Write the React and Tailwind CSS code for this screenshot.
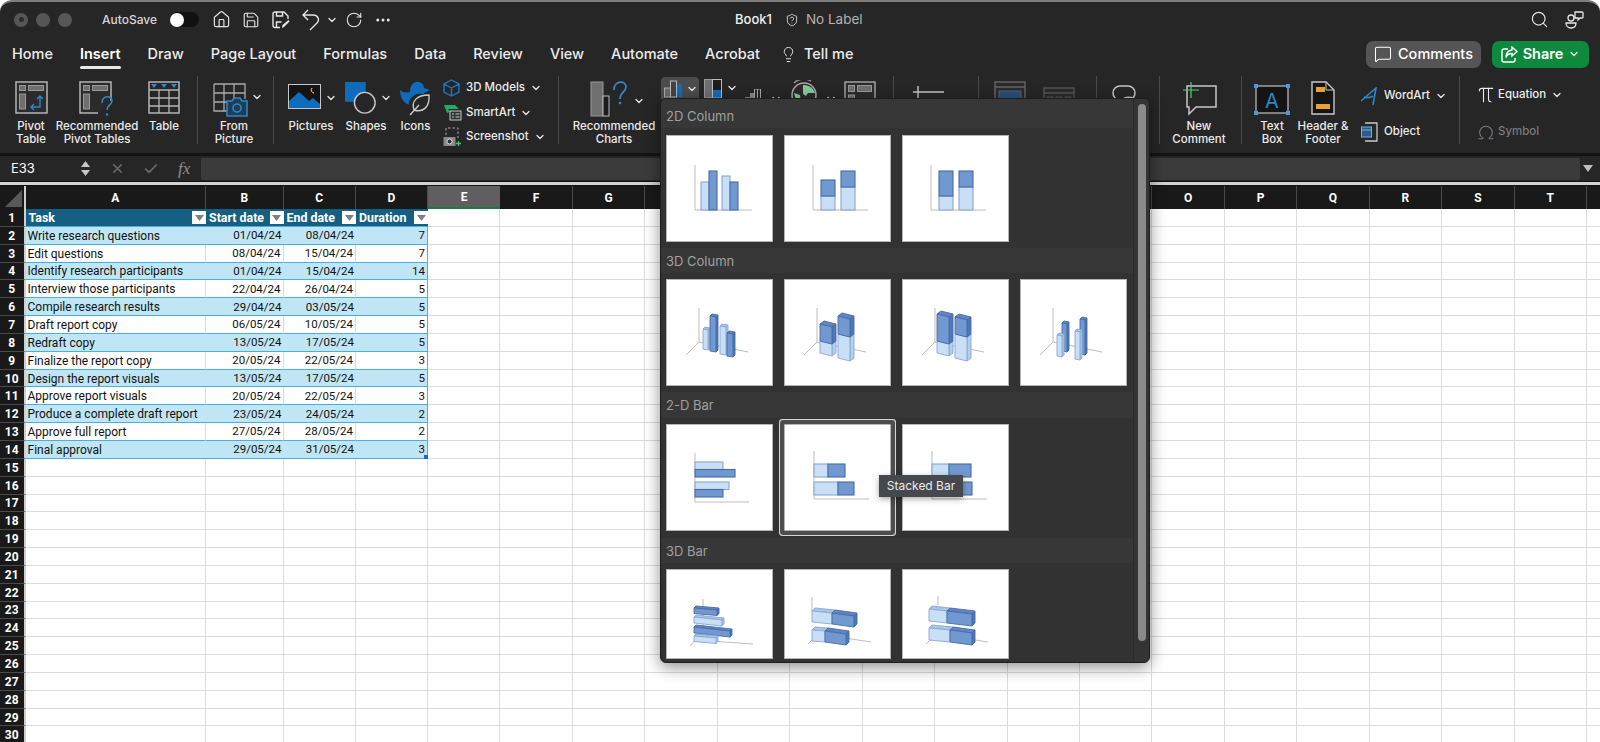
import React from "react";
import {
  House,
  Save,
  RotateCw,
  Ellipsis,
  ChevronDown,
  Lightbulb,
  Search,
  MessageSquare,
  ShieldQuestion,
  Pi,
  Omega,
  X,
  Check,
} from "lucide-react";

const rows = [
  ["Write research questions", "01/04/24", "08/04/24", 7],
  ["Edit questions", "08/04/24", "15/04/24", 7],
  ["Identify research participants", "01/04/24", "15/04/24", 14],
  ["Interview those participants", "22/04/24", "26/04/24", 5],
  ["Compile research results", "29/04/24", "03/05/24", 5],
  ["Draft report copy", "06/05/24", "10/05/24", 5],
  ["Redraft copy", "13/05/24", "17/05/24", 5],
  ["Finalize the report copy", "20/05/24", "22/05/24", 3],
  ["Design the report visuals", "13/05/24", "17/05/24", 5],
  ["Approve report visuals", "20/05/24", "22/05/24", 3],
  ["Produce a complete draft report", "23/05/24", "24/05/24", 2],
  ["Approve full report", "27/05/24", "28/05/24", 2],
  ["Final approval", "29/05/24", "31/05/24", 3],
];

const tabs = ["Home", "Insert", "Draw", "Page Layout", "Formulas", "Data", "Review", "View", "Automate", "Acrobat"];
const emptyCols = "EFGHIJKLMNOPQRST".split("");
const rowNums = Array.from({ length: 30 }, (_, i) => i + 1);

const Chev = ({ className = "" }) => (
  <ChevronDown size={12} strokeWidth={2.6} className={"text-[#e8e8e8] shrink-0 " + className} />
);

const Sep = () => <div className="w-px h-[68px] bg-[#4a4a4a] shrink-0" />;

const BLUE = "#2f86c9";

const PivotIcon = () => (
  <svg width="33" height="33" viewBox="0 0 33 33">
    <rect x="1" y="1" width="31" height="31" fill="#2b2b2b" stroke="#b4b4b4" strokeWidth="1.5" />
    <rect x="4.5" y="4.5" width="6" height="5" fill="#6f6f6f" stroke="#999" />
    <rect x="13.5" y="4.5" width="15" height="5" fill="#6f6f6f" stroke="#999" />
    <rect x="4.5" y="13" width="6" height="15" fill="#6f6f6f" stroke="#999" />
    <path d="M16 26h9V15M22 18l3-3 3 3M19 23l-3 3 3 3" fill="none" stroke={BLUE} strokeWidth="1.4" />
  </svg>
);

const RecPivotIcon = () => (
  <svg width="36" height="36" viewBox="0 0 36 36">
    <path d="M32 20V1H1v31h18" fill="#2b2b2b" stroke="#b4b4b4" strokeWidth="1.5" />
    <rect x="4.5" y="4.5" width="6" height="5" fill="#6f6f6f" stroke="#999" />
    <rect x="13.5" y="4.5" width="15" height="5" fill="#6f6f6f" stroke="#999" />
    <rect x="4.5" y="13" width="6" height="15" fill="#6f6f6f" stroke="#999" />
    <path d="M23 22c0-8 10-8 10-2 0 4-5 4-5 9" fill="none" stroke={BLUE} strokeWidth="1.6" />
    <circle cx="28" cy="33.5" r="1.2" fill={BLUE} />
  </svg>
);

const TableIcon = () => (
  <svg width="32" height="33" viewBox="0 0 32 33">
    <rect x="1" y="1" width="30" height="31" fill="#262626" stroke="#b4b4b4" strokeWidth="1.5" />
    <path d="M1 9h30M1 17h30M1 25h30M11 9v23M21 9v23" stroke="#b4b4b4" strokeWidth="1.3" />
    <path d="M3 3h6l-3 4zM13 3h6l-3 4zM23 3h6l-3 4z" fill={BLUE} />
  </svg>
);

const FromPictureIcon = () => (
  <svg width="36" height="36" viewBox="0 0 36 36">
    <path d="M1 1h31v15M1 1v27h13M1 10h31M1 19h14M11 1v27M21 1v15" fill="none" stroke="#aaa" strokeWidth="1.3" />
    <path d="M14 18h5l2-3h6l2 3h5v15H14z" fill="#1f3d55" stroke={BLUE} strokeWidth="1.6" />
    <circle cx="24" cy="25" r="4" fill="none" stroke={BLUE} strokeWidth="1.6" />
  </svg>
);

const PicturesIcon = () => (
  <svg width="33" height="25" viewBox="0 0 33 25">
    <rect x="0.5" y="0.5" width="32" height="24" fill="#141414" stroke="#c8c8c8" />
    <path d="M1 24V17l10-9 10 9 4-3 7 6v4z" fill="#0f6cbd" />
    <path d="M24 4a3 3 0 0 0 2 5 3 3 0 0 1-2-5z" fill="#e8a33d" stroke="#e8a33d" />
  </svg>
);

const ShapesIcon = () => (
  <svg width="34" height="35" viewBox="0 0 34 35">
    <rect x="0" y="0" width="22" height="21" fill="#0f6cbd" />
    <circle cx="21" cy="22" r="11" fill="#262626" stroke="#c8c8c8" strokeWidth="1.5" />
  </svg>
);

const IconsIcon = () => (
  <svg width="32" height="35" viewBox="0 0 32 35">
    <path d="M0 9c4 3 6 3 10 2 0-7 4-11 9-10 4 1 5 4 5 6l6 2-6 3c0 3-1 5-4 7L14 24C8 26 0 20 0 9z" fill="#0f6cbd" />
    <circle cx="20" cy="24" r="11" fill="#262626" stroke="#262626" />
    <path d="M10 34 19 24M14 29c-3-9 3-15 15-15 1 12-6 18-15 15z" fill="#262626" stroke="#c8c8c8" strokeWidth="1.4" />
  </svg>
);

const CubeIcon = () => (
  <svg width="17" height="18" viewBox="0 0 17 18" fill="none" stroke="#1f77c6" strokeWidth="1.4">
    <path d="M8.5 1 16 5v8l-7.500 4L1 13V5zM1 5l7.500 4L16 5M8.500 9v8" />
  </svg>
);

const SmartArtIcon = () => (
  <svg width="19" height="17" viewBox="0 0 19 17">
    <path d="M1 1h11l4 4H5l2 3-3 1z" fill="#2aa866" />
    <rect x="7" y="7" width="11" height="9" fill="#333" stroke="#c8c8c8" />
    <path d="M9 10h2M12.500 10h4M9 13h2M12.500 13h4" stroke="#c8c8c8" />
  </svg>
);

const ScreenshotIcon = () => (
  <svg width="19" height="20" viewBox="0 0 19 20">
    <path d="M3 8V1h12v10" fill="none" stroke="#aaa" strokeDasharray="2.500 2" />
    <rect x="0.500" y="10" width="12" height="9" fill="#8a8a8a" />
    <circle cx="6.500" cy="14.500" r="2.500" fill="#333" stroke="#ddd" />
    <path d="M15.500 14v5M13 16.500h5" stroke="#4cc06a" strokeWidth="1.3" />
  </svg>
);

const RecChartsIcon = () => (
  <svg width="42" height="36" viewBox="0 0 42 36">
    <rect x="1" y="1" width="12" height="34" fill="#6f6f6f" stroke="#999" />
    <rect x="13" y="15" width="6" height="20" fill="#1c1c1c" stroke="#bbb" />
    <path d="M24 9c0-10 12-10 12-3 0 5-6 5-6 12" fill="none" stroke={BLUE} strokeWidth="1.8" />
    <circle cx="30" cy="22" r="1.300" fill={BLUE} />
  </svg>
);

const ColumnIcon = () => (
  <svg width="19" height="18" viewBox="0 0 19 18">
    <rect x="0.500" y="8" width="6" height="9" fill="#6a6a6a" stroke="#aaa" />
    <rect x="6.500" y="1" width="6" height="16" fill="#444" stroke="#bbb" />
    <rect x="13" y="4" width="5" height="13" fill="#0f6cbd" />
  </svg>
);

const HierarchyIcon = () => (
  <svg width="18" height="19" viewBox="0 0 18 19">
    <rect x="0.500" y="0.500" width="8" height="18" fill="#6f6f6f" stroke="#999" />
    <rect x="8.500" y="0.500" width="9" height="18" fill="#1c1c1c" stroke="#bbb" />
    <rect x="9" y="11" width="8" height="7.500" fill="#0f6cbd" />
  </svg>
);

const WaterfallIcon = () => (
  <svg width="16" height="12" viewBox="0 0 16 12">
    <path d="M0 8h5v4H0zM5 4h4v8H5z" fill="#888" />
    <path d="M9.500 0h6v12h-6z" fill="none" stroke="#aaa" />
    <path d="M12.500 0v12" stroke="#aaa" />
  </svg>
);

const MapIcon = () => (
  <svg width="26" height="28" viewBox="0 0 26 28">
    <circle cx="13" cy="15" r="12" fill="#2b2b2b" stroke="#a8a8a8" strokeWidth="1.500" />
    <path d="M3 3A14 14 0 0 1 20 1" fill="none" stroke="#8a8a8a" strokeWidth="1.500" />
    <path d="M12 5c5 0 10 2 12 8l-7 0-2 3-3-2zM3 13l6 2 1 8-5-3z" fill="#86c995" />
  </svg>
);

const PivotChartIcon = () => (
  <svg width="32" height="32" viewBox="0 0 32 32">
    <rect x="1" y="1" width="30" height="30" fill="#2b2b2b" stroke="#a8a8a8" strokeWidth="1.400" />
    <rect x="4.500" y="4.500" width="6" height="6" fill="#6f6f6f" stroke="#999" />
    <rect x="13.500" y="4.500" width="14" height="6" fill="#6f6f6f" stroke="#999" />
    <rect x="4.500" y="14" width="6" height="14" fill="#6f6f6f" stroke="#999" />
    <rect x="24" y="19" width="4" height="9" fill="none" stroke="#ddd" />
  </svg>
);

const SparkIcon = () => (
  <svg width="31" height="26" viewBox="0 0 31 26" fill="none">
    <path d="M0 7h31M5 1v24" stroke="#c8c8c8" strokeWidth="1.400" />
    <path d="M5 20l4-6 4 6M15 20l4-6 4 6M24 20l3-6 3 6" stroke={BLUE} strokeWidth="1.400" />
  </svg>
);

const DimLayoutIcon = () => (
  <svg width="33" height="28" viewBox="0 0 33 28">
    <rect x="1" y="1" width="30" height="26" fill="#2b2b2b" stroke="#666" strokeWidth="1.400" />
    <path d="M1 6h30" stroke="#666" strokeWidth="1.400" />
    <rect x="5" y="10" width="22" height="8" fill="#2b4f78" stroke="#51657c" />
    <path d="M16 23h16" stroke="#666" strokeWidth="1.400" />
  </svg>
);

const DimLayoutIconTwo = () => (
  <svg width="33" height="24" viewBox="0 0 33 24">
    <rect x="1" y="1" width="30" height="22" fill="#2b2b2b" stroke="#555" strokeWidth="1.400" />
    <path d="M1 6h30" stroke="#555" strokeWidth="1.400" />
    <rect x="4" y="10" width="6" height="6" fill="#3c3c3c" stroke="#555" />
    <rect x="13" y="10" width="6" height="6" fill="#3c3c3c" stroke="#555" />
    <rect x="22" y="10" width="6" height="6" fill="#3c3c3c" stroke="#555" />
  </svg>
);

const LinkedBubbleIcon = () => (
  <svg width="32" height="26" viewBox="0 0 32 26" fill="none" stroke="#c8c8c8" strokeWidth="1.500">
    <rect x="1" y="1" width="22" height="14" rx="7" />
    <path d="M9 19c0-6 6-8 12-6 5 1 9 4 9 9" />
  </svg>
);

const NewCommentIcon = () => (
  <svg width="35" height="34" viewBox="0 0 35 34" fill="none">
    <path d="M5 4h29v21H14l-7 7v-7H5z" stroke="#c8c8c8" strokeWidth="1.500" />
    <path d="M9 0v16M1 8h16" stroke="#52d273" strokeWidth="1.200" />
  </svg>
);

const TextBoxIcon = () => (
  <svg width="36" height="31" viewBox="0 0 36 31">
    <rect x="2" y="2" width="32" height="27" fill="#141414" stroke="#b4b4b4" strokeWidth="1.300" />
    <path d="M0 0h4v4H0zM32 0h4v4h-4zM0 27h4v4H0zM32 27h4v4h-4z" fill="#4a9ae0" />
    <text x="18" y="24" textAnchor="middle" fontSize="20" fontFamily="Inter, sans-serif" fill={BLUE}>A</text>
  </svg>
);

const HeaderFooterIcon = () => (
  <svg width="24" height="34" viewBox="0 0 24 34">
    <path d="M1 1h14l8 8v24H1z" fill="#141414" stroke="#c8c8c8" strokeWidth="1.400" />
    <path d="M15 1v8h8" fill="none" stroke="#c8c8c8" />
    <rect x="5" y="6" width="9" height="5" fill="#e8a033" />
    <rect x="5" y="23" width="14" height="5" fill="#e8a033" />
  </svg>
);

const WordArtIcon = () => (
  <svg width="16" height="19" viewBox="0 0 16 19" fill="none" stroke={BLUE} strokeWidth="1.600">
    <path d="M0 14 15 1l-3 17M3 10c3 1 6 1 9-1" />
  </svg>
);

const ObjectIcon = () => (
  <svg width="17" height="20" viewBox="0 0 17 20" fill="none">
    <path d="M4 1h12v18H4" stroke="#c8c8c8" strokeWidth="1.300" />
    <rect x="0.500" y="5" width="10" height="10" fill="#2a5d8a" stroke="#6fb1e8" />
    <path d="M1 8h9" stroke="#6fb1e8" />
  </svg>
);

const SaveAsIcon = () => (
  <svg width="18" height="18" viewBox="0 0 18 18" fill="none" stroke="#e8e8e8" strokeWidth="1.400">
    <path d="M8 16.500H3a2 2 0 0 1-2-2V3a2 2 0 0 1 2-2h9l4 4v3" />
    <path d="M4.500 1v4h6V1M4.500 16v-5h5" />
    <path d="m10 17 .5-3 6-5 1 1.500-5.500 5.500z" fill="#e8e8e8" stroke="none" />
  </svg>
);

const UndoIcon = () => (
  <svg width="19" height="22" viewBox="0 0 19 22" fill="none" stroke="#e4e4e4" strokeWidth="1.400" className="shrink-0">
    <path d="M7 1 2 6l5 5M2 6h10c5 0 7 5 4 8l-7 7" />
  </svg>
);

const ShareIcon = () => (
  <svg width="17" height="17" viewBox="0 0 17 17" fill="none" stroke="#fff" strokeWidth="1.400">
    <path d="M7 3H3a2 2 0 0 0-2 2v9a2 2 0 0 0 2 2h9a2 2 0 0 0 2-2v-2" />
    <path d="M11 1l5 4.500-5 4.500V7.500c-3 0-5 1-6 4 0-4 2-7 6-7.500z" />
  </svg>
);

const PeopleIcon = () => (
  <svg width="19" height="19" viewBox="0 0 19 19" fill="none" stroke="#e8e8e8" strokeWidth="1.300">
    <circle cx="6" cy="8" r="3" />
    <path d="M1 13h10c0 3-2 5-5 5s-5-2-5-5z" />
    <path d="M10 2h7a1 1 0 0 1 1 1v4a1 1 0 0 1-1 1h-2l-2 2V8h-3z" />
  </svg>
);

// little blue bars used in every chart tile
const LIGHT = { fill: "#c9dff5", stroke: "#8aa6d2", top: "#a9c6ea", side: "#b4cfee" };
const DARK = { fill: "#7298d0", stroke: "#466ca8", top: "#5f86c0", side: "#4f78b4" };

const Bar = ({ x, y, w, h, c }) => <rect x={x} y={y} width={w} height={h} fill={c.fill} stroke={c.stroke} strokeWidth="1.100" />;

const Box = ({ x, y, w, h, s = 1, d = 2, dy = 1.500, c }) => (
  <g stroke={c.stroke} strokeWidth="0.900" strokeLinejoin="round">
    <polygon points={`${x},${y} ${x + d},${y - dy} ${x + w + d},${y + s - dy} ${x + w},${y + s}`} fill={c.top} />
    <polygon points={`${x + w},${y + s} ${x + w + d},${y + s - dy} ${x + w + d},${y + h + s - dy} ${x + w},${y + h + s}`} fill={c.side} />
    <polygon points={`${x},${y} ${x + w},${y + s} ${x + w},${y + h + s} ${x},${y + h}`} fill={c.fill} />
  </g>
);

const Axis2D = ({ d }) => <path d={d} fill="none" stroke="#b5b5b5" strokeWidth="0.900" />;
const AXIS_3D = "M33 29V63M33 63 20 76M33 63 82 73";

const charts = {
  col1: (
    <>
      <Axis2D d="M29 30V75H86" />
      <Bar x={35} y={47} w={8} h={28} c={LIGHT} />
      <Bar x={43} y={36} w={8} h={39} c={DARK} />
      <Bar x={56} y={41} w={8} h={34} c={LIGHT} />
      <Bar x={64} y={47} w={8} h={28} c={DARK} />
    </>
  ),
  col2: (
    <>
      <Axis2D d="M29 30V75H84" />
      <Bar x={37} y={61} w={14} h={14} c={LIGHT} />
      <Bar x={37} y={45} w={14} h={16} c={DARK} />
      <Bar x={57} y={52} w={14} h={23} c={LIGHT} />
      <Bar x={57} y={36} w={14} h={16} c={DARK} />
    </>
  ),
  col3: (
    <>
      <Axis2D d="M29 30V75H84" />
      <Bar x={37} y={61} w={14} h={14} c={LIGHT} />
      <Bar x={37} y={36} w={14} h={25} c={DARK} />
      <Bar x={57} y={52} w={14} h={23} c={LIGHT} />
      <Bar x={57} y={36} w={14} h={16} c={DARK} />
    </>
  ),
  col3d1: (
    <>
      <Axis2D d={AXIS_3D} />
      <Box x={37} y={50} w={5} h={20} d={2} dy={2} c={LIGHT} />
      <Box x={44} y={37} w={6} h={35} d={2} dy={2} c={DARK} />
      <Box x={54} y={47} w={6} h={28} d={2} dy={2} c={LIGHT} />
      <Box x={61} y={54} w={6} h={23} d={2} dy={2} c={DARK} />
    </>
  ),
  col3d2: (
    <>
      <Axis2D d={AXIS_3D} />
      <Box x={36} y={62} w={12} h={12} s={3} d={4} dy={3} c={LIGHT} />
      <Box x={36} y={45} w={12} h={17} s={3} d={4} dy={3} c={DARK} />
      <Box x={54} y={55} w={12} h={24} s={3} d={4} dy={3} c={LIGHT} />
      <Box x={54} y={37} w={12} h={18} s={3} d={4} dy={3} c={DARK} />
    </>
  ),
  col3d3: (
    <>
      <Axis2D d={AXIS_3D} />
      <Box x={35} y={62} w={12} h={12} s={3} d={4} dy={3} c={LIGHT} />
      <Box x={35} y={35} w={12} h={27} s={3} d={4} dy={3} c={DARK} />
      <Box x={53} y={55} w={12} h={24} s={3} d={4} dy={3} c={LIGHT} />
      <Box x={53} y={38} w={12} h={17} s={3} d={4} dy={3} c={DARK} />
    </>
  ),
  col3d4: (
    <>
      <Axis2D d={AXIS_3D} />
      <Box x={42} y={44} w={5} h={28} d={2} dy={2} c={DARK} />
      <Box x={60} y={40} w={5} h={35} d={2} dy={2} c={DARK} />
      <Box x={37} y={56} w={5} h={21} d={2} dy={2} c={LIGHT} />
      <Box x={55} y={52} w={5} h={28} d={2} dy={2} c={LIGHT} />
    </>
  ),
  bar1: (
    <>
      <Axis2D d="M29 29V78H83" />
      <Bar x={29} y={38} w={28} h={7.500} c={LIGHT} />
      <Bar x={29} y={45.500} w={40} h={7.500} c={DARK} />
      <Bar x={29} y={58} w={34} h={7.500} c={LIGHT} />
      <Bar x={29} y={65.500} w={28} h={7.500} c={DARK} />
    </>
  ),
  bar2: (
    <>
      <Axis2D d="M30 27V75H85" />
      <Bar x={30} y={40} w={14} h={13} c={LIGHT} />
      <Bar x={44} y={40} w={17} h={13} c={DARK} />
      <Bar x={30} y={58} w={24} h={13} c={LIGHT} />
      <Bar x={54} y={58} w={16} h={13} c={DARK} />
    </>
  ),
  bar3: (
    <>
      <Axis2D d="M30 27V75H85" />
      <Bar x={30} y={40} w={17} h={13} c={LIGHT} />
      <Bar x={47} y={40} w={22} h={13} c={DARK} />
      <Bar x={30} y={58} w={21} h={13} c={LIGHT} />
      <Bar x={51} y={58} w={19} h={13} c={DARK} />
    </>
  ),
  bar3d1: (
    <>
      <Axis2D d="M37 30V62M29 71 24 77M29 71 87 75" />
      <Box x={28} y={39} w={23} h={5.500} s={2} d={2} dy={2} c={DARK} />
      <Box x={28} y={48} w={28} h={6} s={3} d={2} dy={2} c={LIGHT} />
      <Box x={28} y={58} w={36} h={6} s={4} d={2} dy={2} c={DARK} />
      <Box x={28} y={67} w={22} h={5.500} s={2} d={2} dy={2} c={LIGHT} />
    </>
  ),
  bar3d2: (
    <>
      <Axis2D d="M28 28V42M28 71 24 75M28 64 87 73" />
      <Box x={28} y={42} w={20} h={11} s={2} d={3} dy={3} c={LIGHT} />
      <Box x={48} y={44} w={22} h={11} s={3} d={3} dy={3} c={DARK} />
      <Box x={28} y={61} w={13} h={11} s={1} d={3} dy={3} c={LIGHT} />
      <Box x={41} y={62} w={21} h={11} s={3} d={3} dy={3} c={DARK} />
    </>
  ),
  bar3d3: (
    <>
      <Axis2D d="M36 27V36M28 71 24 75M28 64 86 73" />
      <Box x={27} y={40} w={18} h={12} s={2} d={3} dy={3} c={LIGHT} />
      <Box x={45} y={42} w={25} h={12} s={3} d={3} dy={3} c={DARK} />
      <Box x={27} y={59} w={21} h={12} s={2} d={3} dy={3} c={LIGHT} />
      <Box x={48} y={61} w={22} h={12} s={3} d={3} dy={3} c={DARK} />
    </>
  ),
};

const Tile = ({ name, selected, short }) => (
  <div
    className={
      "w-[107px] bg-white border border-[#b4b4b4] shrink-0 overflow-hidden " +
      (short ? "h-[90px] " : "h-[107px] ") +
      (selected ? "rounded-[1px] shadow-[0_0_0_4px_#4d4d4d,0_0_0_5px_#d6d6d6]" : "")
    }
  >
    <svg width="107" height="107" viewBox="0 0 107 107" className="-m-px">
      {charts[name]}
    </svg>
  </div>
);

const SectionHead = ({ label, className }) => (
  <div className={"bg-[#373737] pl-[5px] flex items-center text-[13px] text-[#a0a0a0] " + className}>{label}</div>
);

const ChartMenu = () => (
  <div className="absolute left-[660px] top-[98px] w-[490px] h-[565px] bg-[#323232] rounded-md border border-[#1d1d1d] shadow-[0_4px_16px_rgba(0,0,0,0.45)] overflow-hidden flex z-20">
    <div className="w-[472px] h-full overflow-hidden shrink-0">
      <SectionHead label="2D Column" className="h-[29px] pt-[6px]" />
      <div className="flex gap-[11px] pl-[5px] pt-[7px] pb-[6px]">
        <Tile name="col1" />
        <Tile name="col2" />
        <Tile name="col3" />
      </div>
      <SectionHead label="3D Column" className="h-[25px] pt-[2px]" />
      <div className="flex gap-[11px] pl-[5px] pt-[6px] pb-[6px]">
        <Tile name="col3d1" />
        <Tile name="col3d2" />
        <Tile name="col3d3" />
        <Tile name="col3d4" />
      </div>
      <SectionHead label="2-D Bar" className="h-[26px] pt-[2px]" />
      <div className="flex gap-[11px] pl-[5px] pt-[6px] pb-[7px]">
        <Tile name="bar1" />
        <Tile name="bar2" selected />
        <Tile name="bar3" />
      </div>
      <SectionHead label="3D Bar" className="h-[25px] pt-[2px]" />
      <div className="flex gap-[11px] pl-[5px] pt-[6px]">
        <Tile name="bar3d1" short />
        <Tile name="bar3d2" short />
        <Tile name="bar3d3" short />
      </div>
    </div>
    <div className="flex-1 border-l border-[#2a2a2a] bg-[#343434] pl-[4px] pt-[5px]">
      <div className="w-[8px] h-[537px] rounded-full bg-[#8a8a8a]" />
    </div>
    <div className="absolute left-[218px] top-[376px] h-[22px] w-[84px] bg-[#45484d] text-[#ececec] text-[12px] flex items-center justify-center shadow-[0_2px_6px_rgba(0,0,0,0.35)]">
      Stacked Bar
    </div>
  </div>
);

const FilterBtn = () => (
  <span className="ml-auto w-[14px] h-[13px] bg-white flex items-center justify-center shrink-0">
    <svg width="9" height="6" viewBox="0 0 9 6">
      <path d="M0 0h9L4.500 6z" fill="#7f7f7f" />
    </svg>
  </span>
);

const Sheet = () => (
  <div className="grid grid-cols-[25.500px_180.500px_77.500px_72.500px_72px_repeat(16,72.440px)_1fr] grid-rows-[23px] auto-rows-[17.850px] font-[Roboto,sans-serif] text-[11.500px] text-[#111] bg-white">
    <div className="bg-[#191919] border-r-2 border-[#cfcfcf] relative overflow-hidden">
      <svg width="17" height="17" viewBox="0 0 17 17" className="absolute right-[2px] bottom-[2px]">
        <path d="M17 0v17H0z" fill="#595959" />
      </svg>
    </div>
    {["A", "B", "C", "D"].map((c) => (
      <div key={c} className="bg-[#191919] border-r border-[#4a4a4a] text-white font-bold text-[12px] flex items-center justify-center">
        {c}
      </div>
    ))}
    {emptyCols.map((c) =>
      c === "E" ? (
        <div key={c} className="bg-[#5f5f5f] border-b-2 border-[#1d7a45] text-white font-bold text-[12px] flex items-center justify-center">
          {c}
        </div>
      ) : (
        <div key={c} className="bg-[#191919] border-r border-[#4a4a4a] text-white font-bold text-[12px] flex items-center justify-center">
          {c}
        </div>
      )
    )}
    <div className="bg-[#191919]" />

    {rowNums.map((n) => {
      const row = rows[n - 2];
      const band = n % 2 === 0;
      return (
        <React.Fragment key={n}>
          <div className="bg-[#191919] border-r-2 border-b border-r-[#cfcfcf] border-b-[#4a4a4a] text-white font-bold text-[12px] pt-[1px] flex items-center justify-center">
            {n}
          </div>
          {n === 1 &&
            ["Task", "Start date", "End date", "Duration"].map((h) => (
              <div key={h} className="bg-[#156082] text-white font-bold text-[12.400px] pl-[3px] pt-[1px] flex items-center border-b border-[#45b0e1] whitespace-nowrap">
                {h}
                <FilterBtn />
              </div>
            ))}
          {row && (
            <>
              <div className={"flex items-center pl-[2px] pt-[1px] text-[12px] whitespace-nowrap border-b border-b-[#45b0e1] " + (band ? "bg-[#c0e6f5]" : "bg-white border-r border-r-[#dcdcdc]")}>
                {row[0]}
              </div>
              <div className={"flex items-center justify-end pr-[2px] pt-[1px] border-b border-b-[#45b0e1] " + (band ? "bg-[#c0e6f5]" : "bg-white border-r border-r-[#dcdcdc]")}>
                {row[1]}
              </div>
              <div className={"flex items-center justify-end pr-[2px] pt-[1px] border-b border-b-[#45b0e1] " + (band ? "bg-[#c0e6f5]" : "bg-white border-r border-r-[#dcdcdc]")}>
                {row[2]}
              </div>
              <div className={"relative flex items-center justify-end pr-[2px] pt-[1px] border-b border-b-[#45b0e1] border-r border-r-[#45b0e1] " + (band ? "bg-[#c0e6f5]" : "bg-white")}>
                {row[3]}
                {n === 14 && <span className="absolute right-[-1px] bottom-[-1px] w-[4px] h-[4px] bg-[#2a62c4]" />}
              </div>
            </>
          )}
          {n > 14 &&
            [0, 1, 2, 3].map((i) => <div key={i} className="border-r border-b border-[#dcdcdc]" />)}
          {emptyCols.map((c) => (
            <div key={c} className="border-r border-b border-[#dcdcdc]" />
          ))}
          <div className="border-b border-[#dcdcdc]" />
        </React.Fragment>
      );
    })}
  </div>
);

const ItemLabel = ({ children }) => (
  <div className="text-center text-[11.500px] leading-[13px] font-medium text-[#ececec] whitespace-nowrap">{children}</div>
);

const Ribbon = () => (
  <div className="flex h-[82px] pt-[5px] pl-[8px] shrink-0">
    <div className="w-[46px] flex flex-col items-center">
      <div className="h-[44px] pt-[5px]"><PivotIcon /></div>
      <ItemLabel>Pivot<br />Table</ItemLabel>
    </div>
    <div className="w-[86px] flex flex-col items-center">
      <div className="h-[44px] pt-[5px]"><RecPivotIcon /></div>
      <ItemLabel>Recommended<br />Pivot Tables</ItemLabel>
    </div>
    <div className="w-[48px] flex flex-col items-center">
      <div className="h-[44px] pt-[5px]"><TableIcon /></div>
      <ItemLabel>Table</ItemLabel>
    </div>
    <div className="ml-[9px]"><Sep /></div>
    <div className="w-[72px] flex flex-col items-center">
      <div className="h-[44px] pt-[7px] flex items-start gap-[2px] ml-[8px]">
        <FromPictureIcon />
        <Chev className="mt-[8px]" />
      </div>
      <ItemLabel>From<br />Picture</ItemLabel>
    </div>
    <div className="ml-[3px]"><Sep /></div>

    <div className="ml-[8px] w-[58px] flex flex-col">
      <div className="h-[44px] pt-[8px] pl-[6px] flex items-start gap-[4px]">
        <PicturesIcon />
        <Chev className="mt-[8px]" />
      </div>
      <ItemLabel>Pictures</ItemLabel>
    </div>
    <div className="w-[52px] flex flex-col">
      <div className="h-[44px] pt-[5px] pl-[5px] flex items-start gap-[3px]">
        <ShapesIcon />
        <Chev className="mt-[11px]" />
      </div>
      <ItemLabel>Shapes</ItemLabel>
    </div>
    <div className="w-[47px] flex flex-col items-center">
      <div className="h-[44px] pt-[5px]"><IconsIcon /></div>
      <ItemLabel>Icons</ItemLabel>
    </div>
    <div className="w-[119px] pl-[4px] flex flex-col text-[11.500px] font-medium text-[#ececec] whitespace-nowrap">
      <div className="flex items-center h-[17px] mt-[3px]">
        <span className="w-[23px]"><CubeIcon /></span>3D Models<Chev className="ml-[5px]" />
      </div>
      <div className="flex items-center h-[17px] mt-[8px]">
        <span className="w-[23px]"><SmartArtIcon /></span>SmartArt<Chev className="ml-[5px]" />
      </div>
      <div className="flex items-center h-[17px] mt-[7px]">
        <span className="w-[23px]"><ScreenshotIcon /></span>Screenshot<Chev className="ml-[5px]" />
      </div>
    </div>
    <Sep />

    <div className="ml-[13px] w-[84px] flex flex-col items-center">
      <div className="h-[44px] pt-[5px] flex items-start gap-[1px] ml-[6px]">
        <RecChartsIcon />
        <Chev className="mt-[14px]" />
      </div>
      <ItemLabel>Recommended<br />Charts</ItemLabel>
    </div>

    <div className="ml-[5px] mt-[1px] w-[38px] h-[24px] bg-[#4c4c4c] rounded-[4px] flex items-center pl-[3px] gap-[3px]">
      <ColumnIcon />
      <Chev />
    </div>
    <div className="ml-[5px] mt-[3px]"><HierarchyIcon /></div>
    <Chev className="ml-[4px] mt-[6px]" />
    <div className="ml-[7px] mt-[13px]"><WaterfallIcon /></div>
    <Chev className="ml-[9px] mt-[17px]" />
    <div className="ml-[9px] mt-[4px]"><MapIcon /></div>
    <Chev className="ml-[8px] mt-[17px]" />
    <div className="ml-[7px] mt-[5px]"><PivotChartIcon /></div>
    <div className="ml-[17px]"><Sep /></div>
    <div className="ml-[19px] mt-[9px]"><SparkIcon /></div>
    <Chev className="ml-[5px] mt-[18px]" />
    <div className="ml-[17px]"><Sep /></div>
    <div className="ml-[15px] mt-[5px]"><DimLayoutIcon /></div>
    <div className="ml-[16px] mt-[11px]"><DimLayoutIconTwo /></div>
    <div className="ml-[20px]"><Sep /></div>
    <div className="ml-[15px] mt-[9px]"><LinkedBubbleIcon /></div>
    <div className="ml-[15px]"><Sep /></div>

    <div className="w-[78px] flex flex-col items-center">
      <div className="h-[44px] pt-[6px] pl-[1px]"><NewCommentIcon /></div>
      <ItemLabel>New<br />Comment</ItemLabel>
    </div>
    <div className="ml-[3px]"><Sep /></div>
    <div className="ml-[5px] w-[50px] flex flex-col items-center">
      <div className="h-[44px] pt-[8px]"><TextBoxIcon /></div>
      <ItemLabel>Text<br />Box</ItemLabel>
    </div>
    <div className="w-[52px] flex flex-col items-center">
      <div className="h-[44px] pt-[5px]"><HeaderFooterIcon /></div>
      <ItemLabel>Header &amp;<br />Footer</ItemLabel>
    </div>
    <div className="w-[110px] pl-[12px] flex flex-col text-[11.500px] font-medium text-[#ececec]">
      <div className="flex items-center h-[20px] mt-[10px]">
        <span className="w-[23px]"><WordArtIcon /></span>WordArt<Chev className="ml-[5px]" />
      </div>
      <div className="flex items-center h-[20px] mt-[16px]">
        <span className="w-[23px]"><ObjectIcon /></span>Object
      </div>
    </div>
    <Sep />
    <div className="pl-[16px] flex flex-col text-[11.500px] font-medium">
      <div className="flex items-center h-[20px] mt-[9px] text-[#ececec]">
        <Pi size={20} strokeWidth={1.3} className="w-[24px] -ml-[2px]" />Equation<Chev className="ml-[5px]" />
      </div>
      <div className="flex items-center h-[20px] mt-[17px] text-[#7c7c7c]">
        <Omega size={19} strokeWidth={1.3} className="w-[24px] -ml-[2px]" />Symbol
      </div>
    </div>
  </div>
);

const App = () => {
  return (
    <div className="relative w-[1600px] h-[742px] overflow-hidden bg-white font-[Inter,sans-serif]">
      <div className="h-full flex flex-col bg-[#262626] rounded-t-[12px] border-t-2 border-[#7d7d7d] overflow-hidden">
        {/* title bar */}
        <div className="h-[35px] flex items-center pl-[14px] shrink-0 text-[#e4e4e4]">
          <div className="flex gap-[8px]">
            <span className="w-[14px] h-[14px] rounded-full bg-[#565656] flex items-center justify-center">
              <span className="w-[5px] h-[5px] rounded-full bg-[#2d2d2d]" />
            </span>
            <span className="w-[14px] h-[14px] rounded-full bg-[#565656]" />
            <span className="w-[14px] h-[14px] rounded-full bg-[#565656]" />
          </div>
          <span className="ml-[30px] w-[56px] text-[12px] font-medium text-[#d6d6d6]">AutoSave</span>
          <span className="ml-[12px] w-[29px] h-[15px] rounded-full bg-[#111] flex items-center">
            <span className="w-[14px] h-[14px] rounded-full bg-white" />
          </span>
          <House size={19} strokeWidth={1.5} className="ml-[13px]" />
          <Save size={18} strokeWidth={1.5} className="ml-[11px]" />
          <span className="ml-[12px]"><SaveAsIcon /></span>
          <span className="ml-[11px]"><UndoIcon /></span>
          <Chev className="ml-[6px]" />
          <RotateCw size={18} strokeWidth={1.5} className="ml-[7px]" />
          <Ellipsis size={18} strokeWidth={2} className="ml-[11px]" />
          <span className="ml-[343px] text-[13px] font-medium text-[#f0f0f0]">Book1</span>
          <ShieldQuestion size={14} strokeWidth={1.5} className="ml-[13px]" />
          <span className="ml-[7px] text-[13.500px] text-[#b4b4b4]">No Label</span>
          <Search size={19} strokeWidth={1.5} className="ml-auto" />
          <span className="ml-[16px] mr-[16px]"><PeopleIcon /></span>
        </div>

        {/* tabs */}
        <div className="h-[34px] flex items-center pl-[12px] pr-[11px] gap-[27px] shrink-0 text-[14.500px] font-medium text-[#ececec]">
          {tabs.map((t) => (
            <div key={t} className={"relative h-full flex items-center " + (t === "Insert" ? "font-semibold text-white" : "")}>
              {t}
              {t === "Insert" && <span className="absolute left-0 right-0 bottom-[2px] h-[3px] rounded-full bg-[#e8e8e8]" />}
            </div>
          ))}
          <div className="flex items-center gap-[7px] -ml-[7px]">
            <Lightbulb size={17} strokeWidth={1.3} />
            Tell me
          </div>
          <div className="ml-auto flex items-center gap-[11px]">
            <div className="w-[115px] h-[27px] rounded-[7px] bg-[#555] flex items-center justify-center gap-[6px] text-white">
              <MessageSquare size={18} strokeWidth={1.4} />
              Comments
            </div>
            <div className="w-[97px] h-[27px] rounded-[7px] bg-[#0e8a3e] flex items-center justify-center gap-[5px] text-white font-semibold">
              <ShareIcon />
              Share
              <Chev />
            </div>
          </div>
        </div>

        <Ribbon />

        <div className="h-[3px] bg-[#141414] shrink-0" />

        {/* formula bar */}
        <div className="h-[25px] flex items-center shrink-0 text-white">
          <span className="w-[76px] pl-[11px] text-[13px]">E33</span>
          <span className="w-[18px] flex flex-col items-center gap-[3px]">
            <svg width="9" height="6" viewBox="0 0 9 6"><path d="M4.500 0 9 6H0z" fill="#c8c8c8" /></svg>
            <svg width="9" height="6" viewBox="0 0 9 6"><path d="M0 0h9L4.500 6z" fill="#c8c8c8" /></svg>
          </span>
          <X size={15} strokeWidth={2.6} className="ml-[16px] text-[#6a6a6a]" />
          <Check size={16} strokeWidth={2.6} className="ml-[18px] text-[#6a6a6a]" />
          <span className="ml-[19px] w-[20px] font-[Liberation_Serif,serif] italic text-[17px] text-[#8f8f8f]">fx</span>
          <div className="ml-[3px] w-[1379px] h-[22px] bg-[#3b3b3b] rounded-[2px]" />
          <svg width="10" height="7" viewBox="0 0 10 7" className="ml-[3px]"><path d="M0 0h10L5 7z" fill="#c0c0c0" /></svg>
        </div>
        <div className="h-[1px] bg-[#111] shrink-0" />
        <div className="h-[3px] bg-[#d2d2d2] shrink-0" />
        <div className="h-[1px] bg-[#111] shrink-0" />

        <Sheet />
      </div>
      <ChartMenu />
    </div>
  );
};

export default App;
